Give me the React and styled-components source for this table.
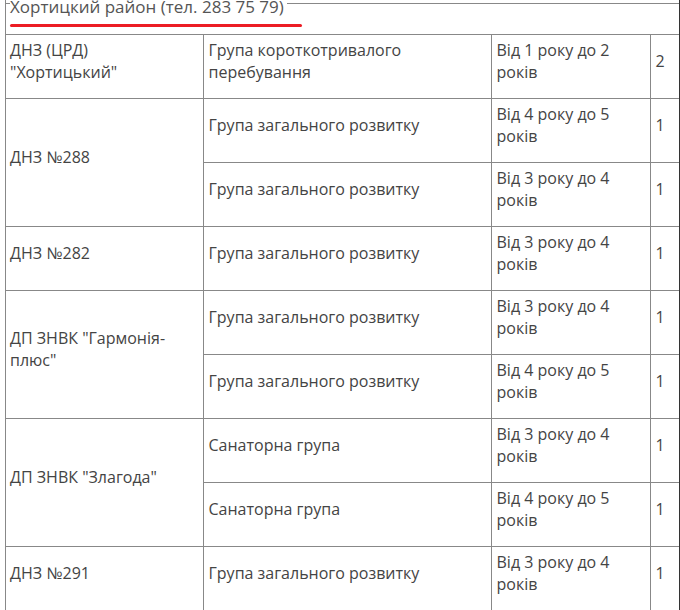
import React from 'react';
import styled, { createGlobalStyle } from 'styled-components';

const Global = createGlobalStyle`
  html, body {
    margin: 0;
    padding: 0;
    background: #fff;
  }
  body {
    font-family: "Open Sans", "Noto Sans", sans-serif;
    font-size: 16px;
    line-height: 22px;
    color: #444;
  }
`;

const Frame = styled.div`
  margin-left: 5px;
  width: 673px;
  height: 607px;
  padding-top: 3px;
  border-left: 1px solid #888;
  border-right: 1px solid #333;
  overflow: hidden;
`;

const Header = styled.div`
  height: 30px;
  border-top: 1px solid #888;
  border-bottom: 1px solid #888;
`;

const Title = styled.h3`
  display: block;
  width: fit-content;
  margin: -9px 0 0 4px;
  padding-right: 3px;
  font-size: 17px;
  font-weight: 400;
  line-height: 24px;
  color: #555;
  background: #fff;
`;

const Underline = styled.div`
  width: 292px;
  height: 3px;
  margin: 5px 0 0 4px;
  border-radius: 2px;
  background: #ec1c24;
`;

const Table = styled.table`
  width: 673px;
  table-layout: fixed;
  border-collapse: collapse;
  border-style: hidden;
`;

const Cell = styled.td`
  height: 51px;
  padding: 0 4px 12px ${(p) => (p.$first ? 4 : 5)}px;
  border: 1px solid #888;
  vertical-align: middle;
  text-align: left;
`;

const rows = [
  { name: <>ДНЗ (ЦРД)<br />"Хортицький"</>, span: 1, group: 'Група короткотривалого перебування', age: 'Від 1 року до 2 років', n: 2 },
  { name: 'ДНЗ №288', span: 2, group: 'Група загального розвитку', age: 'Від 4 року до 5 років', n: 1 },
  { group: 'Група загального розвитку', age: 'Від 3 року до 4 років', n: 1 },
  { name: 'ДНЗ №282', span: 1, group: 'Група загального розвитку', age: 'Від 3 року до 4 років', n: 1 },
  { name: 'ДП ЗНВК "Гармонія-плюс"', span: 2, group: 'Група загального розвитку', age: 'Від 3 року до 4 років', n: 1 },
  { group: 'Група загального розвитку', age: 'Від 4 року до 5 років', n: 1 },
  { name: 'ДП ЗНВК "Злагода"', span: 2, group: 'Санаторна група', age: 'Від 3 року до 4 років', n: 1 },
  { group: 'Санаторна група', age: 'Від 4 року до 5 років', n: 1 },
  { name: 'ДНЗ №291', span: 1, group: 'Група загального розвитку', age: 'Від 3 року до 4 років', n: 1 },
];

export default function App() {
  return (
    <>
      <Global />
      <Frame>
        <Header>
          <Title>Хортицкий район (тел. 283 75 79)</Title>
          <Underline />
        </Header>
        <Table>
          <colgroup>
            <col style={{ width: 197 }} />
            <col style={{ width: 288 }} />
            <col style={{ width: 159 }} />
            <col />
          </colgroup>
          <tbody>
            {rows.map((r, i) => (
              <tr key={i}>
                {r.name && (
                  <Cell $first rowSpan={r.span}>
                    {r.name}
                  </Cell>
                )}
                <Cell>{r.group}</Cell>
                <Cell>{r.age}</Cell>
                <Cell>{r.n}</Cell>
              </tr>
            ))}
          </tbody>
        </Table>
      </Frame>
    </>
  );
}
